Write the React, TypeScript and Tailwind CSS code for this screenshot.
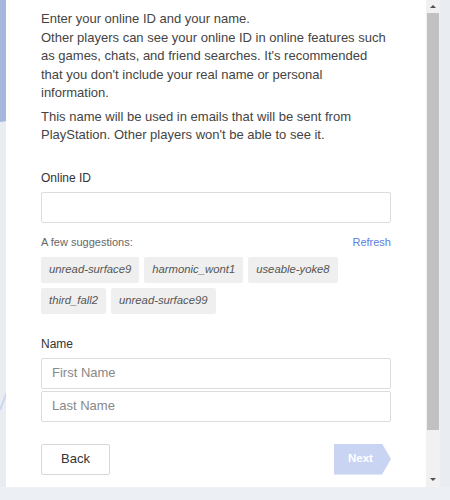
import React from "react";

const chipsRow1 = ["unread-surface9", "harmonic_wont1", "useable-yoke8"];
const chipsRow2 = ["third_fall2", "unread-surface99"];

function Chip({ text }: { text: string }) {
  return (
    <div className="h-[26px] px-[8px] flex items-center bg-[#efefef] rounded-[2px] text-[11.3px] italic text-[#555]">
      {text}
    </div>
  );
}

export default function App() {
  return (
    <div className="w-[450px] h-[500px] relative overflow-hidden bg-[#e9edf2] font-['Liberation_Sans',Arial,sans-serif]">
      <svg className="absolute left-0 top-0" width="450" height="500" viewBox="0 0 450 500">
        <path d="M0 0 H60 V112 Q30 118 0 122 Z" fill="#a6b7dd" />
        <path d="M0 410 Q6 395 12 378" stroke="#c9d6ef" strokeWidth="2" fill="none" />
        <rect x="0" y="487" width="450" height="13" fill="#eceff3" />
      </svg>
      <div className="relative flex h-[487px] pl-[6px]">
        <div className="w-[420px] bg-white pl-[35px] pr-[35px] pt-[10px]">
          <div className="text-[13px] leading-[18.5px] text-[#444]">
            <p>
              Enter your online ID and your name.
              <br />
              Other players can see your online ID in online features such as games, chats, and friend searches. It's recommended that you don't include your real name or personal information.
            </p>
            <p className="mt-[5px]">
              This name will be used in emails that will be sent from PlayStation. Other players won't be able to see it.
            </p>
          </div>

          <div className="mt-[24px] text-[12px] leading-[18px] text-[#333]">Online ID</div>
          <div className="mt-[5px] w-[350px] h-[31px] border border-[#dcdcdc] rounded-[2px]" />

          <div className="mt-[10px] w-[350px] flex justify-between items-center text-[11px] leading-[18px]">
            <span className="text-[#666]">A few suggestions:</span>
            <span className="text-[#5a7fe0]">Refresh</span>
          </div>

          <div className="mt-[6px] flex flex-col gap-[5px]">
            <div className="flex gap-[5px]">
              {chipsRow1.map((c) => (
                <Chip key={c} text={c} />
              ))}
            </div>
            <div className="flex gap-[5px]">
              {chipsRow2.map((c) => (
                <Chip key={c} text={c} />
              ))}
            </div>
          </div>

          <div className="mt-[21px] text-[12px] leading-[18px] text-[#333]">Name</div>
          <div className="mt-[5px] w-[350px] flex flex-col gap-[2px]">
            <div className="h-[31px] border border-[#dcdcdc] rounded-[2px] flex items-center px-[10px] text-[13px] text-[#888]">
              First Name
            </div>
            <div className="h-[31px] border border-[#dcdcdc] rounded-[2px] flex items-center px-[10px] text-[13px] text-[#888]">
              Last Name
            </div>
          </div>

          <div className="mt-[22px] w-[350px] flex justify-between items-center">
            <div className="w-[69px] h-[31px] border border-[#d8d8d8] rounded-[2px] flex items-center justify-center text-[13px] text-[#333]">
              Back
            </div>
            <div className="w-[57px] h-[31px] bg-[#c9d4f3] [clip-path:polygon(0_0,48px_0,57px_50%,48px_100%,0_100%)] flex items-center pl-[14px] text-[11.5px] font-bold text-white">
              Next
            </div>
          </div>
        </div>

        <div className="w-[14px] bg-[#f1f1f1] flex flex-col items-center">
          <div className="h-[13px] flex items-center justify-center">
            <div className="w-0 h-0 border-l-[3px] border-r-[3px] border-b-[3px] border-l-transparent border-r-transparent border-b-[#505050]" />
          </div>
          <div className="w-[12px] h-[417px] bg-[#c1c1c1]" />
          <div className="flex-1 flex items-end justify-center pb-[6px]">
            <div className="w-0 h-0 border-l-[3px] border-r-[3px] border-t-[3px] border-l-transparent border-r-transparent border-t-[#505050]" />
          </div>
        </div>
      </div>
    </div>
  );
}
